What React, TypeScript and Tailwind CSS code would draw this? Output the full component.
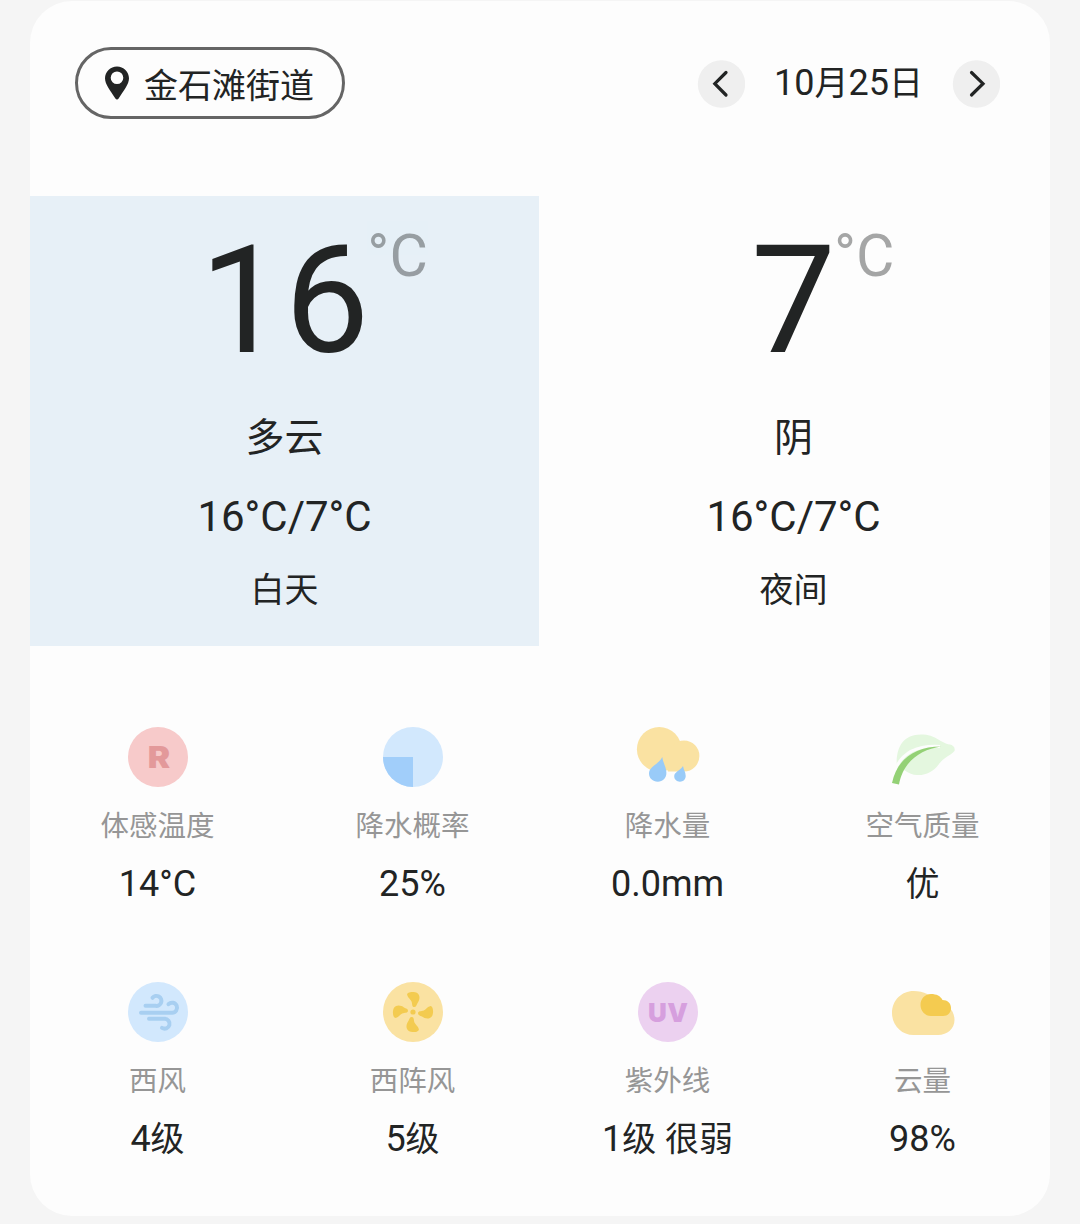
import type { ReactNode } from 'react';

type Period = {
  temp: string;
  condition: string;
  range: string;
  label: string;
  active?: boolean;
};

type Metric = {
  icon: ReactNode;
  label: string;
  value: ReactNode;
};

const periods: Period[] = [
  { temp: '16', condition: '多云', range: '16°C/7°C', label: '白天', active: true },
  { temp: '7', condition: '阴', range: '16°C/7°C', label: '夜间' },
];

const metrics: Metric[] = [
  { icon: <FeelsLikeIcon />, label: '体感温度', value: '14°C' },
  { icon: <RainChanceIcon />, label: '降水概率', value: '25%' },
  { icon: <RainfallIcon />, label: '降水量', value: '0.0mm' },
  { icon: <AirQualityIcon />, label: '空气质量', value: <Han>优</Han> },
  { icon: <WindIcon />, label: '西风', value: <>4<Han>级</Han></> },
  { icon: <GustIcon />, label: '西阵风', value: <>5<Han>级</Han></> },
  { icon: <UvIcon />, label: '紫外线', value: <>1<Han>级</Han> <Han>很弱</Han></> },
  { icon: <CloudCoverIcon />, label: '云量', value: '98%' },
];

export default function App() {
  return (
    <div className="h-[1224px] w-[1080px] overflow-hidden bg-[#f5f5f5] px-[30px] pt-px font-[Roboto,'Noto_Sans_CJK_SC',sans-serif] text-[#222424]">
      <main className="h-[1215px] overflow-hidden rounded-[42px] bg-[#fdfdfd]">
        <header className="flex h-[195px] items-start justify-between pt-[46px] pr-[50px] pl-[45px]">
          <button className="flex h-[72px] w-[270px] items-center rounded-full border-3 border-[#656565] pl-[27px]">
            <PinIcon />
            <span className="ml-[15px] pt-[6px] text-[34px] leading-none">金石滩街道</span>
          </button>
          <div className="flex h-[73px] items-center">
            <RoundButton>
              <path d="M29 12.5 L17.8 23.7 L29 35" />
            </RoundButton>
            <span className="w-[207px] pb-0.5 text-center text-[36px] leading-[48px]">
              10<Han>月</Han>25<Han>日</Han>
            </span>
            <RoundButton>
              <path d="M19.5 12.5 L31 23.7 L19.5 35" />
            </RoundButton>
          </div>
        </header>

        <section className="grid grid-cols-[509px_509px]">
          {periods.map((period) => (
            <PeriodPanel key={period.label} {...period} />
          ))}
        </section>

        <section className="grid grid-cols-4 pt-[81px]">
          {metrics.map((metric) => (
            <MetricCell key={metric.label} {...metric} />
          ))}
        </section>
      </main>
    </div>
  );
}

// Chinese characters sit slightly smaller than the digits beside them
function Han({ children }: { children: ReactNode }) {
  return <span className="text-[34px]">{children}</span>;
}

function PeriodPanel({ temp, condition, range, label, active }: Period) {
  return (
    <div
      className={`flex h-[450px] flex-col items-center ${active ? 'bg-[#e7f0f7]' : ''}`}
    >
      <div className="relative mt-[27px] text-[151px] leading-[156px]">
        {temp}
        <span className="absolute -top-px left-full -ml-0.5 text-[59px] leading-[68px] opacity-40">°C</span>
      </div>
      <p className="mt-[30px] text-[39px] leading-[58px]">{condition}</p>
      <p className="mt-[20px] text-[42px] leading-[60px]">{range}</p>
      <p className="mt-[18px] text-[34px] leading-[50px]">{label}</p>
    </div>
  );
}

function MetricCell({ icon, label, value }: Metric) {
  return (
    <div className="flex h-[255px] flex-col items-center">
      <svg width="64" height="60" viewBox="-2 0 64 60" fill="none">
        {icon}
      </svg>
      <p className="mt-[19px] text-[28.5px] leading-[42px] text-[#969696]">{label}</p>
      <p className="mt-[9px] text-[36px] leading-[54px]">{value}</p>
    </div>
  );
}

function RoundButton({ children }: { children: ReactNode }) {
  return (
    <button className="size-12 rounded-full">
      <svg
        viewBox="0 0 48 48"
        className="size-12"
        fill="none"
        stroke="#222424"
        strokeWidth="3.2"
        strokeLinecap="round"
      >
        <circle cx="24.5" cy="24" r="23.7" fill="#efefef" stroke="none" />
        {children}
      </svg>
    </button>
  );
}

function PinIcon() {
  return (
    <svg width="24" height="34" viewBox="0 0 24 34" fill="#222424" fillRule="evenodd">
      <path d="M12 0.5C5.4 0.5 0 5.8 0 12.3C0 18.5 5.5 24.5 10.2 32.3C11.2 34 12.8 34 13.8 32.3C18.5 24.5 24 18.5 24 12.3C24 5.8 18.6 0.5 12 0.5ZM12 5.5A6.3 6.3 0 1 1 12 18.1A6.3 6.3 0 1 1 12 5.5Z" />
    </svg>
  );
}

function FeelsLikeIcon() {
  return (
    <>
      <circle cx="30" cy="30" r="30" fill="#f7caca" />
      <text
        x="0"
        y="41"
        textAnchor="middle"
        transform="translate(31 0) scale(1.12 1)"
        className="fill-[#e3999a] font-[Inter,sans-serif] text-[30px] font-black"
      >
        R
      </text>
    </>
  );
}

function RainChanceIcon() {
  return (
    <>
      <circle cx="30" cy="30" r="30" fill="#d2e8fd" />
      <path d="M30 30V60A30 30 0 0 1 0 30Z" fill="#a1cefa" />
    </>
  );
}

function RainfallIcon() {
  return (
    <>
      <g fill="#fae2a2">
        <circle cx="21.2" cy="22.3" r="22.3" />
        <circle cx="46" cy="29" r="15.4" />
        <path d="M21 22H46V44.4H30Z" />
      </g>
      <g fill="#99cbf8">
        <path d="M24.3 30C25 36 28.4 40 28.4 46C28.4 51 24.7 54.7 19.8 54.7C14.8 54.7 11 51.2 11 46.5C11 39.5 20 38 24.3 30Z" />
        <path d="M45 39C45.6 43 47.7 45 47.7 49C47.7 52.5 45.2 54.7 42 54.7C38.6 54.7 36.2 52.4 36.2 49.3C36.2 45 42 43.8 45 39Z" />
      </g>
    </>
  );
}

function AirQualityIcon() {
  return (
    <>
      <path
        d="M4 42C2 22 9 7.5 28 7.5C43 7.5 47 16 57 17.5C60 18 62.5 20.5 61.5 24C57 29 51 30 46 37C40 45 33 48.5 24 48C20 48 16 46.5 11 43Z"
        fill="#e4f7df"
      />
      <path d="M1 45C8 26 24 18 47 19.5" stroke="#fdfdfd" strokeWidth="3" />
      <path d="M-1 56C4 32 22 19.5 48 19.5C27 22.5 10 35 6 57.5Z" fill="#94d176" />
    </>
  );
}

function WindIcon() {
  return (
    <>
      <circle cx="30" cy="30" r="30" fill="#d2e8fd" />
      <g stroke="#a8cff1" strokeWidth="4" strokeLinecap="round">
        <path d="M17.5 23.8H27.5A5 5 0 1 0 24.5 15.8" />
        <path d="M13 30.7H44A5 5 0 1 0 40.5 22.2" />
        <path d="M21 36.8H36.5A4.9 4.9 0 1 1 34 45.8" />
      </g>
    </>
  );
}

function GustIcon() {
  return (
    <>
      <circle cx="30" cy="30" r="30" fill="#fae2a2" />
      <g fill="#f3cb50">
        <circle cx="30" cy="30" r="2.6" />
        {[0, 90, 180, 270].map((angle) => (
          <path
            key={angle}
            d="M24.2 13C23.2 9.8 31 9 34.2 11C37.6 13.5 36.8 18 34.6 21C33.4 23 33.4 25 31.2 25C28.6 25 29.6 21.8 28.4 19.2C27.2 16.8 25 16 24.2 13Z"
            transform={`rotate(${angle} 30 30)`}
          />
        ))}
      </g>
    </>
  );
}

function UvIcon() {
  return (
    <>
      <circle cx="30" cy="30" r="30" fill="#ecd1f0" />
      <text
        x="30.3"
        y="40"
        textAnchor="middle"
        className="fill-[#d69fde] font-[Inter,sans-serif] text-[26px] font-black tracking-[0.5px]"
      >
        UV
      </text>
    </>
  );
}

function CloudCoverIcon() {
  return (
    <>
      <path
        d="M20.5 9C8.5 9 -1 18.5 -1 31C-1 43.5 8.5 53 20.5 53H45C54.5 53 61.5 46.5 61.5 38C61.5 28 54 21 43 20C39 13.5 31 9 20.5 9Z"
        fill="#fae2a2"
      />
      <path
        d="M38 12C31.5 12 27.5 17 27.5 23C27.5 29 32 34 38 34H50C55 34 58 30.5 58 26C58 21 54.5 18 49.5 18C47.5 14 43.5 12 38 12Z"
        fill="#f4cb50"
      />
    </>
  );
}
